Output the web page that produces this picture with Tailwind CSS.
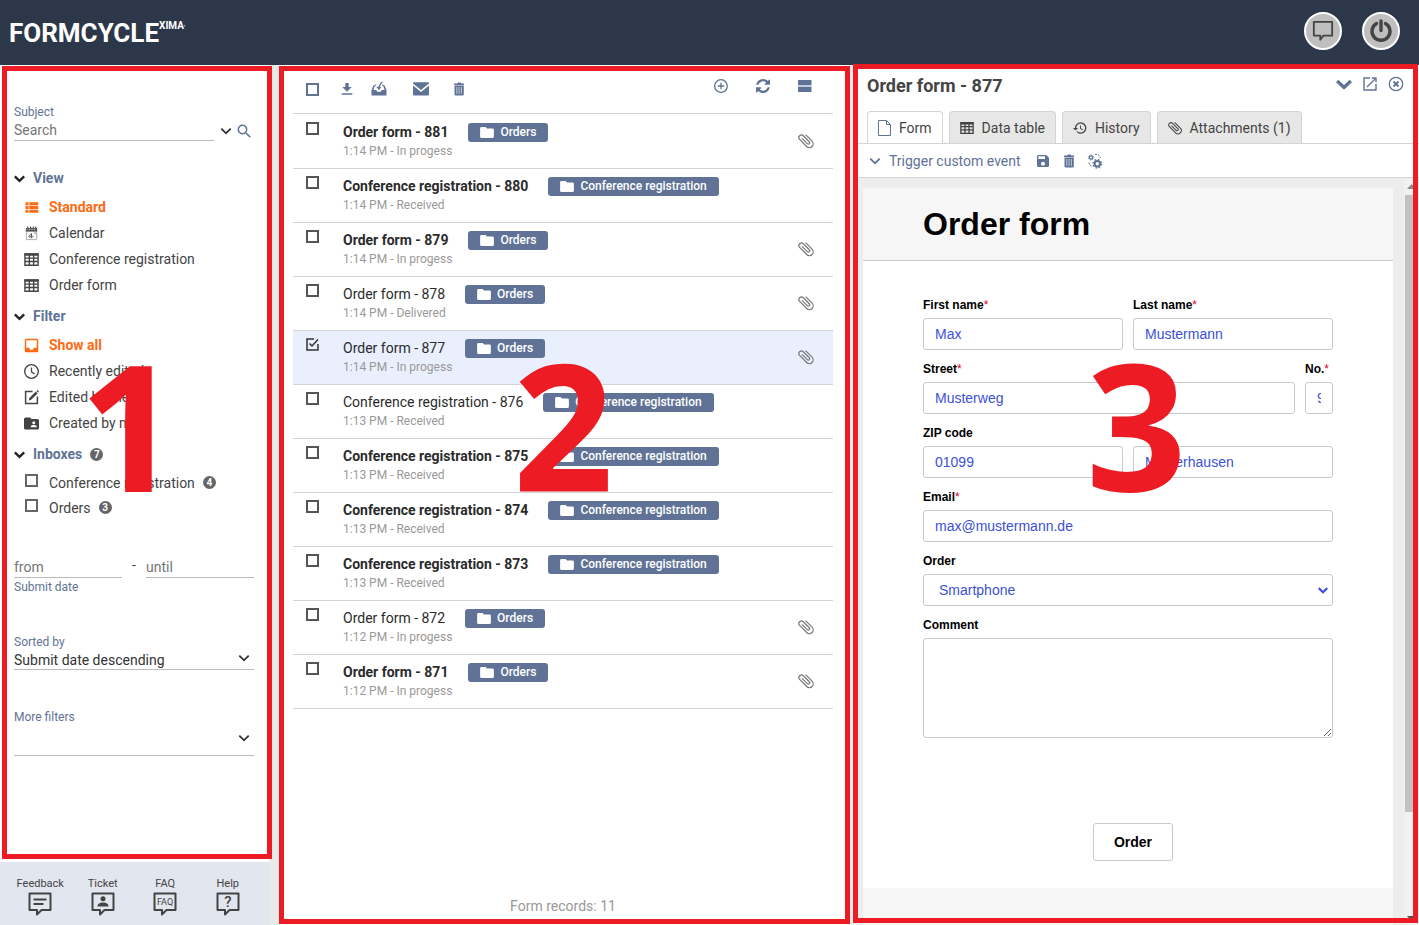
<!DOCTYPE html>
<html lang="en">
<head>
    <meta charset="UTF-8">
    <meta name="viewport" content="width=device-width, initial-scale=1.0">
    <title>Formcycle Inbox</title>
    <script src="https://cdn.jsdelivr.net/npm/@tailwindcss/browser@4"></script>
</head>
<body class="h-screen flex flex-col bg-white font-['Roboto',sans-serif] text-sm text-[#444] overflow-hidden">

    <!-- Icons -->
    <svg class="hidden">
        <symbol id="i-chevron" viewBox="3 3 18 18"><path fill="currentColor" d="M7.41 8.58L12 13.17l4.59-4.59L18 10l-6 6-6-6z"/></symbol>
        <symbol id="i-chevron-bold" viewBox="0 0 16 16"><path fill="none" stroke="currentColor" stroke-width="3.400" d="M1.200 5L8 11.500 14.800 5"/></symbol>
        <symbol id="i-search" viewBox="1 1 21 21"><path fill="currentColor" d="M9.5 3A6.5 6.5 0 0 1 16 9.5c0 1.61-.59 3.09-1.56 4.23l.27.27h.79l5 5-1.5 1.5-5-5v-.79l-.27-.27A6.52 6.52 0 0 1 9.5 16a6.5 6.5 0 0 1 0-13m0 2C7 5 5 7 5 9.5S7 14 9.5 14 14 12 14 9.5 12 5 9.5 5z"/></symbol>
        <symbol id="i-list" viewBox="2 2 20 20"><path fill="currentColor" d="M9 5v4h12V5M9 19h12v-4H9m0-1h12v-4H9M4 9h4V5H4m0 14h4v-4H4m0-1h4v-4H4z"/></symbol>
        <symbol id="i-calendar" viewBox="0 0 16 16"><path fill="#fafafa" stroke="#aaa" d="M2.5 3.5h11v11h-11z"/><path fill="#555" d="M2 2h12v4H2z"/><path stroke="#fff" stroke-dasharray="1 1.5" d="M3 3.5h10"/><path stroke="#555" stroke-width="1.2" d="M4 .5v3M7 .5v3M10 .5v3M12.500 .5v3"/><path fill="none" stroke="#555" d="M8 13V8l-3 3.500h5M11 7.500h1.500"/></symbol>
        <symbol id="i-table" viewBox="0 0 16 16"><path fill="none" stroke="currentColor" stroke-width="1.500" d="M1 2h14v12.200H1zM1 6.500h14M1 10.200h14M5.700 3v11M10.300 3v11"/><path fill="currentColor" d="M.5 1.500h15V4H.5z"/></symbol>
        <symbol id="i-inbox" viewBox="2 2 20 20"><path fill="currentColor" d="M19 15h-4a3 3 0 0 1-6 0H5V5h14m0-2H5a2 2 0 0 0-2 2v14a2 2 0 0 0 2 2h14a2 2 0 0 0 2-2V5a2 2 0 0 0-2-2z"/></symbol>
        <symbol id="i-clock" viewBox="1 1 22 22"><circle cx="12" cy="12" r="10" fill="none" stroke="currentColor" stroke-width="2"/><path fill="none" stroke="currentColor" stroke-width="1.800" d="M12 6v6.500l4.500 3"/></symbol>
        <symbol id="i-edit" viewBox="1 1 14 14"><path fill="none" stroke="currentColor" stroke-width="1.400" d="M9 2.500H2.500v11h11V7"/><path fill="currentColor" d="M6 8.500L12 2.500l1.700 1.700-6 6L5.500 10.700zM12.600 1.900l.9-.9L15 2.500l-.8.9z"/></symbol>
        <symbol id="i-folder-user" viewBox="2 2 20 20"><path fill="currentColor" d="M19 17h-8v-1c0-1.330 2.670-2 4-2s4 .67 4 2M15 9a2 2 0 0 1 0 4 2 2 0 0 1 0-4m5-3h-8l-2-2H4a2 2 0 0 0-2 2v12a2 2 0 0 0 2 2h16a2 2 0 0 0 2-2V8a2 2 0 0 0-2-2z"/></symbol>
        <symbol id="i-folder" viewBox="2 4 20 16"><path fill="currentColor" d="M10 4H4a2 2 0 0 0-2 2v12a2 2 0 0 0 2 2h16a2 2 0 0 0 2-2V8a2 2 0 0 0-2-2h-8z"/></symbol>
        <symbol id="i-download" viewBox="0 0 24 24"><path fill="currentColor" d="M4 20.500h16v-2H4M19 9h-4.500V3h-5v6H5l7 7z"/></symbol>
        <symbol id="i-tray" viewBox="0 0 16 16"><path fill="currentColor" d="M2.500 4.500L5 3.200 5.500 4 3.800 5 2.300 9h3l1 1.700h3.400l1-1.700h3L12.200 5l-1.500-.8.6-1L13.600 4.500 15.500 9v5.500H.5V9z"/><path fill="none" stroke="currentColor" stroke-width="1.300" d="M8 8.500C7.800 5 8.500 3 11.500 1"/><path fill="currentColor" d="M5.200 5.800h5.200L8 9z"/></symbol>
        <symbol id="i-mail" viewBox="0 0 16 14"><path fill="currentColor" d="M0 1.500L8 8l8-6.500V1a.8.800 0 0 0-.8-.8H.8A.8.800 0 0 0 0 1zM0 3.400V12.500a1 1 0 0 0 1 1h14a1 1 0 0 0 1-1V3.400L8 10z"/></symbol>
        <symbol id="i-trash" viewBox="0 0 16 16"><path fill="currentColor" d="M3 2.500h3.200L7 1.500h2.500l.8 1H13V4H3zM3.500 4.500h9.300v8.800a1.200 1.200 0 0 1-1.200 1.200H4.700a1.200 1.200 0 0 1-1.200-1.200z"/><path stroke="#fff" stroke-width=".8" stroke-opacity=".75" d="M5.800 6v6.800M8.100 6v6.800M10.400 6v6.800"/></symbol>
        <symbol id="i-plus-circle" viewBox="0 0 16 16"><g fill="none" stroke="currentColor" stroke-width="1.300"><circle cx="8" cy="8" r="6.300"/><path d="M8 4.800v6.400M4.800 8h6.400"/></g></symbol>
        <symbol id="i-refresh" viewBox="0 0 1536 1536"><path fill="currentColor" d="M1511 928q0 5-1 7-64 268-268 434.500T764 1536q-146 0-282.500-55T238 1324l-129 129q-19 19-45 19t-45-19-19-45V960q0-26 19-45t45-19h448q26 0 45 19t19 45-19 45l-137 137q71 66 161 102t187 36q134 0 250-65t186-179q11-17 53-117 8-23 30-23h192q13 0 22.500 9.500t9.500 22.500zm25-800v448q0 26-19 45t-45 19h-448q-26 0-45-19t-19-45 19-45l138-138Q969 256 768 256q-134 0-250 65T332 500q-11 17-53 117-8 23-30 23H50q-13 0-22.500-9.500T18 608v-7q65-268 270-434.500T768 0q146 0 284 55.500T1297 212l130-129q19-19 45-19t45 19 19 45z"/></symbol>
        <symbol id="i-bars" viewBox="0 0 16 16"><path fill="currentColor" d="M1 2h13.500v5H1zM1 9h13.500v5H1z"/><path fill="#c3cbd9" d="M1 7h13.500v2H1z"/></symbol>
        <symbol id="i-clip" viewBox="2 2 20 20"><path fill="currentColor" transform="rotate(-45 12 12)" d="M16.500 6v11.500a4 4 0 0 1-8 0V5a2.500 2.500 0 0 1 5 0v10.500a1 1 0 0 1-2 0V6H10v9.500a2.500 2.500 0 0 0 5 0V5a4 4 0 0 0-8 0v12.500a5.500 5.500 0 0 0 11 0V6z"/></symbol>
        <symbol id="i-file" viewBox="0 0 13 16"><path fill="none" stroke="currentColor" d="M.5.5h8l4 4v11H.5zM8.500.5v4h4"/></symbol>
        <symbol id="i-history" viewBox="1 1 22 22"><path fill="currentColor" d="M13.500 8H12v5l4.280 2.540.72-1.210-3.500-2.080zM13 3a9 9 0 0 0-9 9H1l3.960 4.030L9 12H6a7 7 0 1 1 2.060 4.940l-1.420 1.420A9 9 0 1 0 13 3"/></symbol>
        <symbol id="i-save" viewBox="0 0 24 24"><path fill="currentColor" d="M15 9H5V5h10m-3 14a3 3 0 0 1 0-6 3 3 0 0 1 0 6m5-16H5a2 2 0 0 0-2 2v14a2 2 0 0 0 2 2h14a2 2 0 0 0 2-2V7z"/></symbol>
        <symbol id="i-gears" viewBox="0 0 16 16"><g fill="none" stroke="currentColor"><circle cx="10.300" cy="10.800" r="2.700" stroke-width="2"/><circle cx="10.300" cy="10.800" r="4.200" stroke-width="1.300" stroke-dasharray="1.700 1.599"/><circle cx="4" cy="4.500" r="1.600" stroke-width="1.200"/><circle cx="4" cy="4.500" r="2.600" stroke-width=".9" stroke-dasharray="1.100 .942"/><path stroke-width="1" stroke-dasharray="2 1" d="M8 1.500c2.500-.5 5 .8 5.500 3.500M2 9.500c0 2 1 3.200 2.500 3.700"/></g></symbol>
        <symbol id="i-open" viewBox="0 0 16 16"><path fill="none" stroke="currentColor" stroke-width="1.400" d="M8 2H2v12h12V8M5 11l8.500-8.500"/><path fill="none" stroke="currentColor" stroke-width="1.400" d="M9.800 2H14v4.200"/></symbol>
        <symbol id="i-close" viewBox="0 0 16 16"><g fill="none" stroke="currentColor" stroke-width="1.300"><circle cx="8" cy="8" r="6.700"/><path stroke-width="1.800" d="M5.500 5.500l5 5M10.500 5.500l-5 5"/></g></symbol>
        <symbol id="i-bubble" viewBox="0 0 24 24"><path fill="none" stroke="currentColor" stroke-width="2" stroke-linejoin="round" d="M2 2h20v15h-9.500L9 21.500V17H2z"/></symbol>
        <symbol id="i-power" viewBox="0 0 24 24"><path fill="none" stroke="currentColor" stroke-width="3.400" stroke-linecap="round" d="M7.500 4.500a9 9 0 1 0 9 0M12 2v9.500"/></symbol>
        <symbol id="i-help-bubble" viewBox="0 0 24 24"><path fill="none" stroke="currentColor" stroke-width="2" stroke-linejoin="round" d="M1.500 1.500h21v16.500h-9L9 22.500v-4.500h-7.500z"/></symbol>
        <symbol id="i-check" viewBox="0 0 13 13"><path fill="none" stroke="currentColor" stroke-width="1.500" d="M8 1H1v11h11V6M3.500 5.500L6 8l6-6.500"/></symbol>
    </svg>

    <header class="h-[65px] shrink-0 flex items-center justify-between bg-[#2c3749] pl-[9px] pr-[19px] pb-1">
        <div class="mt-1 flex items-start text-white font-bold">
            <span class="text-[26px] leading-8">FORMCYCLE</span>
            <span class="pt-[3px] text-[10px] leading-3">XIMA<span class="text-[6px]">'</span></span>
        </div>
        <div class="flex gap-5">
            <button type="button" aria-label="Messages" class="size-[38px] rounded-full border-2 border-white bg-[#bfbfbf] flex items-center justify-center"><svg class="size-[22px]"><use href="#i-bubble"/></svg></button>
            <button type="button" aria-label="Log out" class="size-[38px] rounded-full border-2 border-white bg-[#bfbfbf] flex items-center justify-center"><svg class="size-6"><use href="#i-power"/></svg></button>
        </div>
    </header>

    <main class="grow min-h-0 grid grid-cols-[279px_571fr_569fr]">

        <!-- Sidebar -->
        <div class="relative min-h-0 bg-[#e9e9e9] pr-[10px]">
            <aside class="h-full flex flex-col bg-white">
                <div class="grow pt-[39px] pl-[14px] pr-[15px]">
                    <label for="subject" class="block h-4 text-xs leading-4 text-[#5f7396]">Subject</label>
                    <div class="flex items-center h-[21px]">
                        <input id="subject" type="text" placeholder="Search" class="w-[200px] h-full border-b border-[#bbb] outline-none placeholder:text-[#757575]">
                        <button type="button" aria-label="Search options" class="ml-1 text-[#333]"><svg class="size-4"><use href="#i-chevron"/></svg></button>
                        <button type="button" aria-label="Search" class="ml-[2px] text-[#5f7396]"><svg class="size-4"><use href="#i-search"/></svg></button>
                    </div>

                    <h2 class="mt-[25px] flex items-center gap-2 h-6 font-bold text-[#5f7396]"><svg class="size-[11px] text-[#222]"><use href="#i-chevron-bold"/></svg>View</h2>
                    <ul class="mt-1 pl-[10px]">
                        <li><a href="#" class="flex items-center gap-[10px] h-[26px] font-bold text-[#ff6a13]"><svg class="size-[15px]"><use href="#i-list"/></svg>Standard</a></li>
                        <li><a href="#" class="flex items-center gap-[10px] h-[26px]"><svg class="size-[15px]"><use href="#i-calendar"/></svg>Calendar</a></li>
                        <li><a href="#" class="flex items-center gap-[10px] h-[26px]"><svg class="size-[15px]"><use href="#i-table"/></svg>Conference registration</a></li>
                        <li><a href="#" class="flex items-center gap-[10px] h-[26px]"><svg class="size-[15px]"><use href="#i-table"/></svg>Order form</a></li>
                    </ul>

                    <h2 class="mt-[6px] flex items-center gap-2 h-6 font-bold text-[#5f7396]"><svg class="size-[11px] text-[#222]"><use href="#i-chevron-bold"/></svg>Filter</h2>
                    <ul class="mt-1 pl-[10px]">
                        <li><a href="#" class="flex items-center gap-[10px] h-[26px] font-bold text-[#ff6a13]"><svg class="size-[15px]"><use href="#i-inbox"/></svg>Show all</a></li>
                        <li><a href="#" class="flex items-center gap-[10px] h-[26px]"><svg class="size-[15px]"><use href="#i-clock"/></svg>Recently edited</a></li>
                        <li><a href="#" class="flex items-center gap-[10px] h-[26px]"><svg class="size-[15px]"><use href="#i-edit"/></svg>Edited by me</a></li>
                        <li><a href="#" class="flex items-center gap-[10px] h-[26px]"><svg class="size-[15px]"><use href="#i-folder-user"/></svg>Created by me</a></li>
                    </ul>

                    <h2 class="mt-[6px] flex items-center gap-2 h-6 font-bold text-[#5f7396]"><svg class="size-[11px] text-[#222]"><use href="#i-chevron-bold"/></svg>Inboxes <span class="size-[13px] rounded-full bg-[#666] text-white text-[10px] leading-[13px] text-center">7</span></h2>
                    <div class="mt-1 pl-[11px]">
                        <label class="flex items-center h-[25px]"><input type="checkbox" class="appearance-none size-[13px] mb-1 border-2 border-[#666]"><span class="ml-[11px]">Conference registration</span><span class="ml-2 size-[13px] rounded-full bg-[#666] text-white text-[10px] leading-[13px] text-center font-bold">4</span></label>
                        <label class="flex items-center h-[25px]"><input type="checkbox" class="appearance-none size-[13px] mb-1 border-2 border-[#666]"><span class="ml-[11px]">Orders</span><span class="ml-2 size-[13px] rounded-full bg-[#666] text-white text-[10px] leading-[13px] text-center font-bold">3</span></label>
                    </div>

                    <div class="mt-[37px] flex h-[21px]">
                        <input id="from" type="text" aria-label="Submit date from" placeholder="from" class="w-[108px] border-b border-[#bbb] outline-none placeholder:text-[#757575]">
                        <span class="w-6 text-center leading-4">-</span>
                        <input type="text" aria-label="Submit date until" placeholder="until" class="w-[108px] border-b border-[#bbb] outline-none placeholder:text-[#757575]">
                    </div>
                    <label for="from" class="block mt-px h-4 text-xs leading-4 text-[#5f7396]">Submit date</label>

                    <label for="sort" class="block mt-[39px] h-4 text-xs leading-4 text-[#5f7396]">Sorted by</label>
                    <div class="grid items-center">
                        <select id="sort" class="col-start-1 row-start-1 appearance-none w-full h-5 border-b border-[#bbb] outline-none text-[#333]"><option>Submit date descending</option></select>
                        <svg class="col-start-1 row-start-1 justify-self-end mr-[2px] mb-1 size-4 text-[#333] pointer-events-none"><use href="#i-chevron"/></svg>
                    </div>

                    <label for="more" class="block mt-[39px] h-4 text-xs leading-4 text-[#5f7396]">More filters</label>
                    <div class="grid items-center">
                        <select id="more" class="col-start-1 row-start-1 appearance-none w-full h-[31px] border-b border-[#bbb] outline-none"><option></option></select>
                        <svg class="col-start-1 row-start-1 justify-self-end mr-[2px] mb-[6px] size-4 text-[#333] pointer-events-none"><use href="#i-chevron"/></svg>
                    </div>
                </div>

                <nav class="h-[63px] shrink-0 grid grid-cols-4 bg-[#e2e6ee] pl-[9px] pr-[10px] pt-[14px] text-[11px] leading-4">
                    <a href="#" class="flex flex-col items-center">Feedback<svg class="size-6" viewBox="0 0 24 24"><use href="#i-help-bubble"/><path stroke="currentColor" stroke-width="1.800" d="M5.500 7.500h13M5.500 12h10"/></svg></a>
                    <a href="#" class="flex flex-col items-center">Ticket<svg class="size-6" viewBox="0 0 24 24"><use href="#i-help-bubble"/><circle cx="12" cy="6.800" r="2.500" fill="currentColor"/><path fill="currentColor" d="M6.500 14.500c0-3 2.500-4 5.500-4s5.500 1 5.500 4z"/></svg></a>
                    <a href="#" class="flex flex-col items-center">FAQ<svg class="size-6" viewBox="0 0 24 24"><use href="#i-help-bubble"/><text x="12" y="13" font-size="9" text-anchor="middle" fill="currentColor">FAQ</text></svg></a>
                    <a href="#" class="flex flex-col items-center">Help<svg class="size-6" viewBox="0 0 24 24"><use href="#i-help-bubble"/><text x="12" y="15" font-size="15" font-weight="500" text-anchor="middle" fill="currentColor">?</text></svg></a>
                </nav>
            </aside>
            <div class="absolute top-px bottom-[66px] left-[2px] right-[7px] border-5 border-[#ed1c24] pointer-events-none"></div>
            <span class="absolute top-[271px] left-[79px] font-['Open_Sans',sans-serif] font-bold text-[176px] leading-none text-[#ed1c24] pointer-events-none">1</span>
        </div>

        <!-- Record list -->
        <section class="relative min-h-0 flex flex-col bg-white pl-[14px] pr-[17px]">
            <div class="h-12 shrink-0 flex items-center pl-[13px] pr-5 text-[#5f7396]">
                <input type="checkbox" aria-label="Select all" class="appearance-none size-[13px] border-2 border-[#5f7396]">
                <button type="button" aria-label="Download" class="ml-5"><svg class="size-4"><use href="#i-download"/></svg></button>
                <button type="button" aria-label="Move to inbox" class="ml-4"><svg class="size-4"><use href="#i-tray"/></svg></button>
                <button type="button" aria-label="Send mail" class="ml-[26px]"><svg class="w-4 h-[14px]"><use href="#i-mail"/></svg></button>
                <button type="button" aria-label="Delete" class="ml-[22px]"><svg class="size-4"><use href="#i-trash"/></svg></button>
                <div class="ml-auto flex gap-[26px] pb-[6px]">
                    <button type="button" aria-label="New"><svg class="size-4"><use href="#i-plus-circle"/></svg></button>
                    <button type="button" aria-label="Refresh"><svg class="size-4 p-px"><use href="#i-refresh"/></svg></button>
                    <button type="button" aria-label="Layout"><svg class="size-4"><use href="#i-bars"/></svg></button>
                </div>
            </div>
            <ul id="records" class="border-t border-[#d4d4d4] pt-px"></ul>
            <p class="mt-auto pb-2 text-center leading-[22px] text-[#999]">Form records: 11</p>
            <div class="absolute inset-x-0 inset-y-px border-5 border-[#ed1c24] pointer-events-none"></div>
            <span class="absolute top-[270px] left-[234px] font-['Open_Sans',sans-serif] font-bold text-[176px] leading-none text-[#ed1c24] pointer-events-none">2</span>
        </section>

        <!-- Record detail -->
        <section class="relative min-h-0 flex flex-col bg-[#ededed] pl-[3px]">
            <div class="shrink-0 bg-white pl-[14px] h-[46px] flex items-center justify-between pr-[15px] pb-1">
                <h2 class="text-lg font-bold">Order form - 877</h2>
                <div class="flex items-center gap-[10px] pb-1 text-[#5f7396]">
                    <button type="button" aria-label="Collapse"><svg class="size-4"><use href="#i-chevron-bold"/></svg></button>
                    <button type="button" aria-label="Open in new window"><svg class="size-4"><use href="#i-open"/></svg></button>
                    <button type="button" aria-label="Close"><svg class="size-4"><use href="#i-close"/></svg></button>
                </div>
            </div>
            <div class="shrink-0 bg-white pl-[14px] flex gap-[6px] border-b border-[#d4d4d4]">
                <button type="button" class="h-8 px-[10px] flex items-center gap-2 rounded-t border border-b-0 border-[#d4d4d4] bg-white"><svg class="w-[13px] h-4 text-[#5f7396]"><use href="#i-file"/></svg>Form</button>
                <button type="button" class="h-8 px-[10px] flex items-center gap-2 rounded-t border border-b-0 border-[#d4d4d4] bg-[#e7e7e7]"><svg class="size-[14px]"><use href="#i-table"/></svg>Data table</button>
                <button type="button" class="h-8 px-[10px] flex items-center gap-2 rounded-t border border-b-0 border-[#d4d4d4] bg-[#e7e7e7]"><svg class="size-[14px]"><use href="#i-history"/></svg>History</button>
                <button type="button" class="h-8 px-[10px] flex items-center gap-2 rounded-t border border-b-0 border-[#d4d4d4] bg-[#e7e7e7]"><svg class="size-[14px]"><use href="#i-clip"/></svg>Attachments (1)</button>
            </div>
            <div class="shrink-0 h-[34px] flex items-center bg-white pl-[14px] border-b border-[#d4d4d4] text-[#5f7396]">
                <button type="button" class="flex items-center gap-[6px]"><svg class="size-4"><use href="#i-chevron"/></svg>Trigger custom event</button>
                <button type="button" aria-label="Save" class="ml-[14px]"><svg class="size-4"><use href="#i-save"/></svg></button>
                <button type="button" aria-label="Delete" class="ml-[10px]"><svg class="size-4"><use href="#i-trash"/></svg></button>
                <button type="button" aria-label="Process" class="ml-[10px]"><svg class="size-4"><use href="#i-gears"/></svg></button>
            </div>

            <div class="grow min-h-0 flex">
                <div class="grow pt-[10px] pl-[10px] pr-[11px] font-['Liberation_Sans',sans-serif]">
                    <div class="h-full flex flex-col bg-[#f6f6f6] text-black">
                        <h1 class="h-[73px] shrink-0 pl-[60px] border-b border-[#ccc] text-[32px] leading-[72px] font-bold">Order form</h1>
                        <form class="bg-white px-[60px] pt-9 pb-[27px]">
                            <div class="flex gap-[10px]">
                                <div class="flex-1">
                                    <label for="first" class="block mb-[5px] text-xs font-bold">First name<span class="text-[#e0001a] font-normal">*</span></label>
                                    <input id="first" type="text" value="Max" class="w-full h-8 px-[11px] rounded-[3px] border border-[#c8c8c8] text-[#3c50d8]">
                                </div>
                                <div class="flex-1">
                                    <label for="last" class="block mb-[5px] text-xs font-bold">Last name<span class="text-[#e0001a] font-normal">*</span></label>
                                    <input id="last" type="text" value="Mustermann" class="w-full h-8 px-[11px] rounded-[3px] border border-[#c8c8c8] text-[#3c50d8]">
                                </div>
                            </div>
                            <div class="mt-[11px] flex gap-[10px]">
                                <div class="flex-1">
                                    <label for="street" class="block mb-[5px] text-xs font-bold">Street<span class="text-[#e0001a] font-normal">*</span></label>
                                    <input id="street" type="text" value="Musterweg" class="w-full h-8 px-[11px] rounded-[3px] border border-[#c8c8c8] text-[#3c50d8]">
                                </div>
                                <div class="w-7">
                                    <label for="no" class="block mb-[5px] text-xs font-bold">No.<span class="text-[#e0001a] font-normal">*</span></label>
                                    <input id="no" type="text" value="9" class="w-full h-8 px-[11px] rounded-[3px] border border-[#c8c8c8] text-[#3c50d8]">
                                </div>
                            </div>
                            <div class="mt-[11px] flex gap-[10px] items-end">
                                <div class="flex-1">
                                    <label for="zip" class="block mb-[5px] text-xs font-bold">ZIP code</label>
                                    <input id="zip" type="text" value="01099" class="w-full h-8 px-[11px] rounded-[3px] border border-[#c8c8c8] text-[#3c50d8]">
                                </div>
                                <div class="flex-1">
                                    <input type="text" aria-label="City" value="Musterhausen" class="w-full h-8 px-[11px] rounded-[3px] border border-[#c8c8c8] text-[#3c50d8]">
                                </div>
                            </div>
                            <label for="email" class="block mt-[11px] mb-[5px] text-xs font-bold">Email<span class="text-[#e0001a] font-normal">*</span></label>
                            <input id="email" type="email" value="max@mustermann.de" class="w-full h-8 px-[11px] rounded-[3px] border border-[#c8c8c8] text-[#3c50d8]">
                            <label for="order" class="block mt-[11px] mb-[5px] text-xs font-bold">Order</label>
                            <div class="grid items-center text-[#3c50d8]">
                                <select id="order" class="col-start-1 row-start-1 appearance-none w-full h-8 px-[15px] rounded-[3px] border border-[#c8c8c8]"><option>Smartphone</option></select>
                                <svg class="col-start-1 row-start-1 justify-self-end mr-[5px] size-[10px] pointer-events-none"><use href="#i-chevron-bold"/></svg>
                            </div>
                            <label for="comment" class="block mt-[11px] mb-[5px] text-xs font-bold">Comment</label>
                            <textarea id="comment" class="block w-full h-[100px] rounded-[3px] border border-[#c8c8c8] resize"></textarea>
                            <div class="mt-[85px] pl-[10px] flex justify-center">
                                <button type="submit" class="h-[38px] px-5 rounded-[3px] border border-[#c8c8c8] bg-white font-bold">Order</button>
                            </div>
                        </form>
                    </div>
                </div>
                <!-- Scroll bar -->
                <div class="w-[15px] shrink-0 flex flex-col items-center bg-[#f1f1f1] text-[#505050]">
                    <svg class="w-[9px] h-[17px]" viewBox="0 0 9 17"><path fill="#8a8a8a" d="M0 11l4.500-5L9 11z"/></svg>
                    <div class="h-[617px] w-[13px] bg-[#c1c1c1]"></div>
                    <svg class="mt-auto w-[9px] h-[12px]" viewBox="0 0 9 12"><path fill="currentColor" d="M0 3l4.500 5L9 3z"/></svg>
                </div>
            </div>
            <div class="absolute -top-px bottom-[2px] left-[3px] right-px border-5 border-[#ed1c24] pointer-events-none"></div>
            <span class="absolute top-[270px] left-[236px] font-['Open_Sans',sans-serif] font-bold text-[176px] leading-none text-[#ed1c24] pointer-events-none">3</span>
        </section>
    </main>

    <script>
        const records = [
            { title: 'Order form - 881', info: '1:14 PM - In progess', inbox: 'Orders', unread: true, clip: true },
            { title: 'Conference registration - 880', info: '1:14 PM - Received', inbox: 'Conference registration', unread: true },
            { title: 'Order form - 879', info: '1:14 PM - In progess', inbox: 'Orders', unread: true, clip: true },
            { title: 'Order form - 878', info: '1:14 PM - Delivered', inbox: 'Orders', clip: true },
            { title: 'Order form - 877', info: '1:14 PM - In progess', inbox: 'Orders', clip: true, selected: true },
            { title: 'Conference registration - 876', info: '1:13 PM - Received', inbox: 'Conference registration' },
            { title: 'Conference registration - 875', info: '1:13 PM - Received', inbox: 'Conference registration', unread: true },
            { title: 'Conference registration - 874', info: '1:13 PM - Received', inbox: 'Conference registration', unread: true },
            { title: 'Conference registration - 873', info: '1:13 PM - Received', inbox: 'Conference registration', unread: true },
            { title: 'Order form - 872', info: '1:12 PM - In progess', inbox: 'Orders', clip: true },
            { title: 'Order form - 871', info: '1:12 PM - In progess', inbox: 'Orders', unread: true, clip: true }
        ];

        document.getElementById('records').innerHTML = records.map(r => `
            <li class="h-[54px] flex items-start pl-[13px] pr-[19px] border-b border-[#d4d4d4] ${r.selected ? 'bg-[#e9effd]' : ''}">
                <label class="grid mt-[7px] text-[#333]">
                    <input type="checkbox" aria-label="${r.title}" ${r.selected ? 'checked' : ''} class="col-start-1 row-start-1 peer appearance-none size-[13px] border-2 border-[#555] checked:border-transparent">
                    <svg class="col-start-1 row-start-1 size-[13px] invisible peer-checked:visible"><use href="#i-check"/></svg>
                </label>
                <div class="ml-6 pt-[7px]">
                    <div class="flex items-center gap-5 h-5">
                        <span class="text-[#2b2b2b] ${r.unread ? 'font-bold' : ''}">${r.title}</span>
                        <span class="h-[19px] px-3 flex items-center gap-[6px] rounded-[3px] bg-[#607397] text-white text-xs font-medium"><svg class="w-[14px] h-[11px]"><use href="#i-folder"/></svg>${r.inbox}</span>
                    </div>
                    <div class="text-xs leading-[18px] text-[#999]">${r.info}</div>
                </div>
                ${r.clip ? '<svg class="ml-auto mt-[18px] size-4 text-[#777]"><use href="#i-clip"/></svg>' : ''}
            </li>`).join('');
    </script>
</body>
</html>
